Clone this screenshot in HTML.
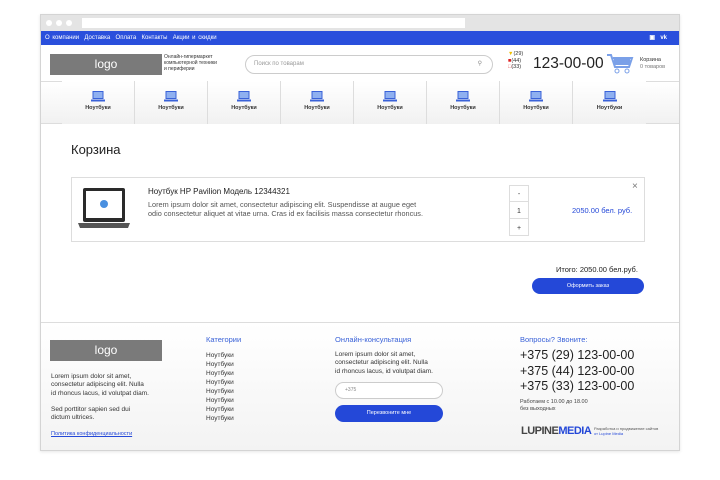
<!DOCTYPE html>
<html><head><meta charset="utf-8"><style>
*{margin:0;padding:0;box-sizing:border-box}
body{width:720px;height:480px;background:#fff;font-family:"Liberation Sans",sans-serif;position:relative;overflow:hidden;color:#222}
.a{position:absolute}
.frame{left:40px;top:14px;width:640px;height:437px;border:1px solid #d4d4d4;background:#fff;box-shadow:0 1px 3px rgba(0,0,0,.1)}
.cat{top:81px;height:43px;width:73px;border-right:1px solid #ddd;text-align:center;font-size:5.5px;font-weight:bold;color:#333;background:linear-gradient(#fff,#f1f1f1)}
.lap{display:block;margin:10px auto 3px;width:14px;height:11px}
.fl{font-size:7px;color:#333;line-height:8.3px}
</style></head><body>
<div class="a frame"></div>
<div class="a" style="left:41px;top:15px;width:638px;height:16px;background:#e4e4e4"></div>
<div class="a" style="left:46px;top:20px;width:6px;height:6px;border-radius:50%;background:#fff"></div>
<div class="a" style="left:56px;top:20px;width:6px;height:6px;border-radius:50%;background:#fff"></div>
<div class="a" style="left:66px;top:20px;width:6px;height:6px;border-radius:50%;background:#fff"></div>
<div class="a" style="left:82px;top:18px;width:383px;height:10px;background:#fff"></div>
<div class="a" style="left:41px;top:31px;width:638px;height:14px;background:#2a4fdc;color:#fff;font-size:6px;line-height:14px;padding-left:4px;word-spacing:1px">О компании &nbsp;Доставка &nbsp;Оплата &nbsp;Контакты &nbsp;Акции и скидки
<span style="position:absolute;right:12px;font-weight:bold">▣ &nbsp;vk</span></div>
<div class="a" style="left:50px;top:54px;width:112px;height:21px;background:#7a7a7a;color:#fff;font-size:12px;text-align:center;line-height:21px">logo</div>
<div class="a" style="left:164px;top:54px;font-size:5px;line-height:6px;color:#333">Онлайн-гипермаркет<br>компьютерной техники<br>и периферии</div>
<div class="a" style="left:245px;top:55px;width:248px;height:19px;border:1px solid #ccc;border-radius:10px;font-size:6px;color:#999;line-height:17px;padding-left:8px">Поиск по товарам<span style="position:absolute;right:10px;color:#888">⚲</span></div>
<div class="a" style="left:508px;top:51px;font-size:5.5px;line-height:6.5px;color:#333"><span style="color:#f0c000">▼</span>(29)<br><span style="color:#e02020">■</span>(44)<br><span style="color:#e05050">□</span>(33)</div>
<div class="a" style="left:533px;top:55px;font-size:15.5px;color:#222">123-00-00</div>
<svg class="a" style="left:606px;top:53px" width="28" height="22" viewBox="0 0 28 22"><path d="M1 2h4l4 12h14l3-9H7" fill="none" stroke="#7aa0e8" stroke-width="2"/><rect x="8" y="6" width="16" height="6" fill="#7aa0e8"/><circle cx="11" cy="18" r="2" fill="none" stroke="#7aa0e8"/><circle cx="21" cy="18" r="2" fill="none" stroke="#7aa0e8"/></svg>
<div class="a" style="left:640px;top:57px;font-size:5.5px;line-height:6.5px;color:#333">Корзина<br><span style="color:#777">0 товаров</span></div>
<div class="a" style="left:41px;top:81px;width:638px;height:43px;border-top:1px solid #ddd;border-bottom:1px solid #ddd;background:linear-gradient(#fff,#f1f1f1)"></div>
<div class="a cat" style="left:62px"><svg class="lap" viewBox="0 0 14 11"><rect x="2" y="0.5" width="10" height="7" fill="#8fb0f0" stroke="#3a62d8"/><rect x="0" y="8.5" width="14" height="2" fill="#3a62d8"/></svg>Ноутбуки</div>
<div class="a cat" style="left:135px"><svg class="lap" viewBox="0 0 14 11"><rect x="2" y="0.5" width="10" height="7" fill="#8fb0f0" stroke="#3a62d8"/><rect x="0" y="8.5" width="14" height="2" fill="#3a62d8"/></svg>Ноутбуки</div>
<div class="a cat" style="left:208px"><svg class="lap" viewBox="0 0 14 11"><rect x="2" y="0.5" width="10" height="7" fill="#8fb0f0" stroke="#3a62d8"/><rect x="0" y="8.5" width="14" height="2" fill="#3a62d8"/></svg>Ноутбуки</div>
<div class="a cat" style="left:281px"><svg class="lap" viewBox="0 0 14 11"><rect x="2" y="0.5" width="10" height="7" fill="#8fb0f0" stroke="#3a62d8"/><rect x="0" y="8.5" width="14" height="2" fill="#3a62d8"/></svg>Ноутбуки</div>
<div class="a cat" style="left:354px"><svg class="lap" viewBox="0 0 14 11"><rect x="2" y="0.5" width="10" height="7" fill="#8fb0f0" stroke="#3a62d8"/><rect x="0" y="8.5" width="14" height="2" fill="#3a62d8"/></svg>Ноутбуки</div>
<div class="a cat" style="left:427px"><svg class="lap" viewBox="0 0 14 11"><rect x="2" y="0.5" width="10" height="7" fill="#8fb0f0" stroke="#3a62d8"/><rect x="0" y="8.5" width="14" height="2" fill="#3a62d8"/></svg>Ноутбуки</div>
<div class="a cat" style="left:500px"><svg class="lap" viewBox="0 0 14 11"><rect x="2" y="0.5" width="10" height="7" fill="#8fb0f0" stroke="#3a62d8"/><rect x="0" y="8.5" width="14" height="2" fill="#3a62d8"/></svg>Ноутбуки</div>
<div class="a cat" style="left:573px;border-right:none"><svg class="lap" viewBox="0 0 14 11"><rect x="2" y="0.5" width="10" height="7" fill="#8fb0f0" stroke="#3a62d8"/><rect x="0" y="8.5" width="14" height="2" fill="#3a62d8"/></svg>Ноутбуки</div>
<div class="a" style="left:71px;top:142px;font-size:13px;color:#222">Корзина</div>
<div class="a" style="left:71px;top:177px;width:574px;height:65px;border:1px solid #ddd"></div>
<svg class="a" style="left:76px;top:187px" width="56" height="44" viewBox="0 0 56 44"><rect x="7" y="1" width="42" height="34" rx="2" fill="#2a2a2a"/><rect x="10" y="4" width="36" height="27" fill="#fff"/><circle cx="28" cy="17" r="4" fill="#4a90e0"/><path d="M2 36h52l-2 5H4z" fill="#555"/></svg>
<div class="a" style="left:148px;top:187px;font-size:8px;color:#222">Ноутбук HP Pavilion Модель 12344321</div>
<div class="a" style="left:148px;top:200px;font-size:7.3px;line-height:9px;color:#555">Lorem ipsum dolor sit amet, consectetur adipiscing elit. Suspendisse at augue eget<br>odio consectetur aliquet at vitae urna. Cras id ex facilisis massa consectetur rhoncus.</div>
<div class="a" style="left:509px;top:185px;width:20px;height:51px;border:1px solid #ddd;font-size:7px;text-align:center;line-height:17px;color:#333">-<br>1<br>+</div>
<div class="a" style="left:509px;top:201px;width:20px;height:18px;border-top:1px solid #ddd;border-bottom:1px solid #ddd"></div>
<div class="a" style="left:632px;top:181px;font-size:10px;color:#777">×</div>
<div class="a" style="left:572px;top:206px;font-size:7.5px;color:#2448d8">2050.00 бел. руб.</div>
<div class="a" style="left:556px;top:265px;font-size:7.5px;color:#222">Итого: 2050.00 бел.руб.</div>
<div class="a" style="left:532px;top:278px;width:112px;height:16px;border-radius:8px;background:#2448d8;color:#fff;font-size:5.5px;text-align:center;line-height:16px">Оформить заказ</div>
<div class="a" style="left:41px;top:322px;width:638px;height:128px;border-top:1px solid #ddd;background:linear-gradient(#fff,#f3f3f3)"></div>
<div class="a" style="left:50px;top:340px;width:112px;height:21px;background:#7a7a7a;color:#fff;font-size:12px;text-align:center;line-height:21px">logo</div>
<div class="a fl" style="left:51px;top:373px;font-size:6.5px">Lorem ipsum dolor sit amet,<br>consectetur adipiscing elit. Nulla<br>id rhoncus lacus, id volutpat diam.<br><br>Sed porttitor sapien sed dui<br>dictum ultrices.</div>
<div class="a" style="left:51px;top:431px;font-size:5.5px;color:#2448d8;text-decoration:underline">Политика конфиденциальности</div>
<div class="a" style="left:206px;top:335px;font-size:7.5px;color:#3a62d8">Категории</div>
<div class="a fl" style="left:206px;top:351px;font-size:6.5px;line-height:9px">Ноутбуки<br>Ноутбуки<br>Ноутбуки<br>Ноутбуки<br>Ноутбуки<br>Ноутбуки<br>Ноутбуки<br>Ноутбуки</div>
<div class="a" style="left:335px;top:335px;font-size:7.5px;color:#3a62d8">Онлайн-консультация</div>
<div class="a fl" style="left:335px;top:351px;font-size:6.5px">Lorem ipsum dolor sit amet,<br>consectetur adipiscing elit. Nulla<br>id rhoncus lacus, id volutpat diam.</div>
<div class="a" style="left:335px;top:382px;width:108px;height:17px;border:1px solid #ccc;border-radius:9px;background:#fff;font-size:5px;color:#888;line-height:15px;padding-left:9px">+375</div>
<div class="a" style="left:335px;top:405px;width:108px;height:17px;border-radius:9px;background:#2448d8;color:#fff;font-size:5.5px;text-align:center;line-height:17px">Перезвоните мне</div>
<div class="a" style="left:520px;top:335px;font-size:7.5px;color:#3a62d8">Вопросы? Звоните:</div>
<div class="a" style="left:520px;top:348px;font-size:12.5px;line-height:15.5px;color:#222">+375 (29) 123-00-00<br>+375 (44) 123-00-00<br>+375 (33) 123-00-00</div>
<div class="a" style="left:520px;top:399px;font-size:5.5px;line-height:7px;color:#444">Работаем с 10.00 до 18.00<br>без выходных</div>
<div class="a" style="left:521px;top:425px;font-size:11px;font-weight:bold;color:#444;letter-spacing:-0.5px">LUPINE<span style="color:#2448d8">MEDIA</span></div>
<div class="a" style="left:594px;top:426px;font-size:4px;line-height:5px;color:#555">Разработка и продвижение сайтов<br><span style="color:#2448d8">от Lupine Media</span></div>
</body></html>
